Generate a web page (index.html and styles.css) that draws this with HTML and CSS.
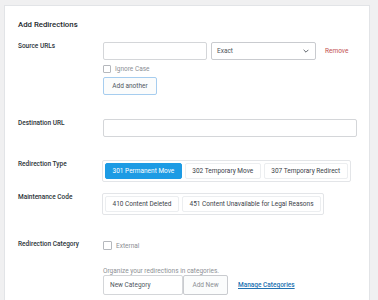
FILE: index.html
```html
<!DOCTYPE html>
<html lang="en">
<head>
    <meta charset="UTF-8">
    <meta name="viewport" content="width=device-width, initial-scale=1.0">
    <title>Add Redirections</title>
    <link rel="stylesheet" href="styles.css">
</head>
<body>
    <div class="card">
        <h2 class="title">Add Redirections</h2>

        <div class="row row-source">
            <div class="label">Source URLs</div>
            <div class="field">
                <div class="source-line">
                    <input class="input input-source" type="text">
                    <div class="select">
                        <span>Exact</span>
                        <svg width="6" height="4" viewBox="0 0 6 4"><path d="M0.6 0.8 L3 3.2 L5.4 0.8" fill="none" stroke="#50575e" stroke-width="0.9"/></svg>
                    </div>
                    <a class="remove" href="#">Remove</a>
                </div>
                <label class="check check-ignore"><span class="box"></span>Ignore Case</label>
                <button class="btn btn-another">Add another</button>
            </div>
        </div>

        <div class="row row-dest">
            <div class="label">Destination URL</div>
            <div class="field">
                <input class="input input-dest" type="text">
            </div>
        </div>

        <div class="row row-type">
            <div class="label">Redirection Type</div>
            <div class="field">
                <div class="group">
                    <button class="seg active">301 Permanent Move</button>
                    <button class="seg">302 Temporary Move</button>
                    <button class="seg">307 Temporary Redirect</button>
                </div>
            </div>
        </div>

        <div class="row row-maint">
            <div class="label">Maintenance Code</div>
            <div class="field">
                <div class="group">
                    <button class="seg">410 Content Deleted</button>
                    <button class="seg">451 Content Unavailable for Legal Reasons</button>
                </div>
            </div>
        </div>

        <div class="row row-cat">
            <div class="label">Redirection Category</div>
            <div class="field">
                <label class="check check-external"><span class="box"></span>External</label>
                <p class="help">Organize your redirections in categories.</p>
                <div class="cat-line">
                    <input class="input input-cat" type="text" placeholder="New Category">
                    <button class="btn btn-addnew">Add New</button>
                    <a class="manage" href="#">Manage Categories</a>
                </div>
            </div>
        </div>
    </div>
</body>
</html>
```

FILE: styles.css
```css
body { margin: 0; padding: 5px 8px 0 4px; background-color: #f0f0f1; font-family: Roboto, "Noto Sans", sans-serif; color: #2c3338; font-size: 6.5px; }
.card { background-color: #fff; border: 1px solid #e2e4e7; border-bottom: none; height: 300px; padding: 0 13px; box-sizing: border-box; }
.title { margin: 14px 0 0; font-size: 7.8px; font-weight: 500; line-height: 10px; color: #23282d; }

.row { display: flex; }
.label { width: 85px; flex: none; font-weight: 500; color: #2c3338; line-height: 9px; white-space: nowrap; }
.field { flex: 1; }

.row-source { margin-top: 12px; }
.source-line { display: flex; align-items: center; }
.input { box-sizing: border-box; height: 18px; border: 1px solid #d4d6d9; border-radius: 2px; background: #fff; font-family: inherit; font-size: 6.5px; padding: 0 6px; margin: 0; color: #2c3338; }
.input::placeholder { color: #50575e; }
.input-source { width: 104px; }
.select { box-sizing: border-box; width: 105px; height: 18px; margin-left: 4px; border: 1px solid #c9cbcf; border-radius: 2px; display: flex; align-items: center; justify-content: space-between; padding: 0 6px 0 5px; color: #50575e; }
.remove { margin-left: 9px; color: #c2514f; text-decoration: none; }

.check { display: flex; align-items: center; color: #8c8f94; }
.box { width: 6px; height: 6px; border: 1px solid #b5b8bd; border-radius: 1px; margin-right: 4px; background: #fff; }
.check-ignore { margin-top: 4px; height: 9px; }

.btn { box-sizing: border-box; height: 18px; font-family: inherit; font-size: 6.5px; border-radius: 2px; background: #fbfcfc; color: #50575e; padding: 0; white-space: nowrap; }
.btn-another { margin-top: 4px; width: 54px; border: 1px solid #a6cdef; color: #50575e; }

.row-dest { margin-top: 24px; }
.input-dest { width: 254px; }

.row-type { margin-top: 23px; }
.row-maint { margin-top: 11px; }
.group { display: inline-flex; gap: 3px; padding: 2px; border: 1px solid #e3e5e8; border-radius: 2px; margin-left: -1px; }
.seg { height: 16px; box-sizing: border-box; border: 1px solid #eceef0; border-radius: 2px; background: #fff; font-family: inherit; font-size: 6.5px; color: #3c434a; padding: 0 6.5px; margin: 0; white-space: nowrap; }
.seg.active { background: #1d9be4; border-color: #1d9be4; color: #fff; }

.row-cat { margin-top: 25px; }
.check-external { height: 11px; }
.check-external .box { width: 7px; height: 7px; }
.help { margin: 16px 0 0; color: #8c8f94; line-height: 8px; }
.cat-line { display: flex; align-items: center; }
.input-cat { width: 80px; height: 20px; }
.btn-addnew { width: 45px; height: 20px; border: 1px solid #c9cbcf; color: #8c8f94; }
.manage { margin-left: 10px; color: #2271b1; font-weight: 500; }
```
